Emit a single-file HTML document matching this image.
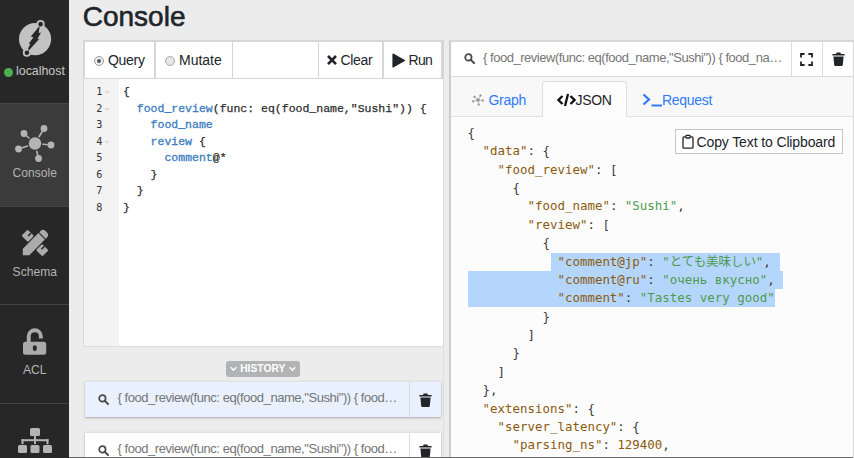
<!DOCTYPE html>
<html lang="en">
<head>
<meta charset="utf-8">
<title>Console</title>
<style>
*{box-sizing:border-box;margin:0;padding:0}
html,body{width:854px;height:458px;overflow:hidden;background:#ececec;font-family:"Liberation Sans","Noto Sans CJK JP",sans-serif;color:#212529}
body{position:relative}
.abs{position:absolute}
/* sidebar */
#side{position:absolute;left:0;top:0;width:69px;height:458px;background:#272727;color:#b4b4b4}
#side .item{position:absolute;left:0;width:70px;text-align:center;font-size:12.5px;color:#b9b9b9}
#side .sep{position:absolute;left:0;width:69px;height:1px;background:#444}
#side .lbl{position:absolute;left:0;width:69.5px;text-align:center;font-size:12.1px;line-height:14px;color:#b4b4b4}
#active{position:absolute;left:0;top:103px;width:69px;height:103px;background:#3b3b3b;border-top:1px solid #484848}
/* main */
h2{position:absolute;left:82.75px;top:1px;font-size:28px;font-weight:normal;line-height:32px;color:#212529;letter-spacing:0;-webkit-text-stroke:.6px #212529}
#ed{position:absolute;left:83px;top:40px;width:361px;height:307px;background:#dcdcdc}
#edbar{position:absolute;left:0;top:0;width:361px;height:39px;background:#d6d6d6}
.cell{position:absolute;top:2px;height:35.5px;background:#fff}
.btn{position:absolute;top:2px;height:36px;font-size:14px;line-height:36px;color:#212529;white-space:nowrap}
.vsep{position:absolute;top:0;width:2px;height:36px;background:#d9d9d9}
#code{position:absolute;left:1px;top:39px;width:359px;height:267px;background:#fff;overflow:hidden}
#gutter{position:absolute;left:0;top:0;width:35px;height:267px;background:#f3f3f3}
.ln{position:absolute;left:0;width:18.5px;text-align:right;font-family:"DejaVu Sans Mono","Liberation Mono",monospace;font-size:10.2px;line-height:16.5px;color:#333}
.fold{position:absolute;left:19.5px;width:0;height:0;border-left:3px solid transparent;border-right:3px solid transparent;border-top:3.5px solid #dcdcdc}
.cl{position:absolute;left:39px;font-family:"Liberation Mono",monospace;font-size:11.5px;line-height:16.5px;white-space:pre;color:#2b2b2b;font-weight:normal;-webkit-text-stroke:.25px #2b2b2b}
.cl b{color:#3b7cc0;font-weight:normal;-webkit-text-stroke:.3px #3b7cc0}
/* history */
#histbadge{position:absolute;left:225.5px;top:361px;width:74.5px;height:15.5px;border-radius:3px;background:#b1b3b5;color:#fff;font-size:10.3px;font-weight:bold;line-height:15.5px;text-align:center;letter-spacing:0}
.hist{position:absolute;left:85px;width:355.5px;height:36px;border-top:1px solid #dfe3e8;box-shadow:0 1px 2px rgba(0,0,0,.28)}
.hist .q{position:absolute;left:32.5px;top:-1.5px;line-height:34px;font-size:13px;color:#757575;white-space:nowrap;letter-spacing:-.45px}
.hist .vs{position:absolute;left:324px;top:0;width:1px;height:35px;background:#d9dde2}
/* right */
#rp{position:absolute;left:449px;top:40px;width:405px;height:418px;background:#d8d8d8}
#rhead{position:absolute;left:2px;top:2px;width:402px;height:34px;background:#fff}
#rhead .q{position:absolute;left:32px;top:-1.5px;line-height:34px;font-size:13px;color:#757575;white-space:nowrap;letter-spacing:-.47px}
#tabs{position:absolute;left:2px;top:37px;width:402px;height:40px;background:#f8f8f9;border-bottom:1px solid #dcdfe3}
.tab{position:absolute;top:0;font-size:14px;line-height:20px;white-space:nowrap}
#tabact{position:absolute;left:91px;top:4px;width:85px;height:36px;background:#fdfdfd;border:1px solid #dcdfe3;border-bottom:none;border-radius:4px 4px 0 0}
#json{position:absolute;left:2px;top:77px;width:402px;height:341px;background:#fcfcfc;overflow:hidden}
.jl{position:absolute;left:16.6px;font-family:"DejaVu Sans Mono","Noto Sans CJK JP",monospace;font-size:12.44px;line-height:18.37px;white-space:pre;color:#3a3a3a;height:18.37px}
.k{color:#8a5a0c}.s{color:#4f9a4f}.n{color:#8a5a0c}
.sel{position:absolute;background:#b5d6fc}
#copy{position:absolute;left:224px;top:12px;width:168px;height:25px;border:1px solid #c4c4c4;background:#fff;font-size:14px;letter-spacing:-.12px;line-height:23px;color:#212529;white-space:nowrap}
</style>
</head>
<body>
<div id="side">
  <div id="active"></div>
  <!-- logo -->
  <svg class="abs" style="left:16px;top:18px" width="40" height="42" viewBox="0 0 40 42">
    <circle cx="19.05" cy="21.05" r="16.1" fill="#c2c2c2"/>
    <line x1="24.6" y1="6.15" x2="10.9" y2="34.75" stroke="#272727" stroke-width="1.5"/>
    <circle cx="24.6" cy="6.15" r="3.2" fill="#272727" stroke="#c2c2c2" stroke-width="1.8"/>
    <circle cx="10.9" cy="34.75" r="3.2" fill="#272727" stroke="#c2c2c2" stroke-width="1.8"/>
    <path d="M23.6 8 L22.7 15.1 L25 14.5 L21.3 21.3 L23.5 20.8 L11.4 34 L15.4 26.1 L12.8 25.5 L17.6 19.2 L14.8 18.4 Z" fill="#272727"/>
  </svg>
  <div class="abs" style="left:4px;top:67.5px;width:9px;height:9px;border-radius:50%;background:#4caf50"></div>
  <div class="lbl" style="left:16px;width:55px;text-align:left;top:64px;font-size:12.4px;color:#c8c8c8">localhost</div>
  <!-- console icon -->
  <svg class="abs" style="left:14px;top:122px" width="42" height="42" viewBox="0 0 42 42" fill="#b4b4b4" stroke="#b4b4b4">
    <circle cx="30" cy="6.5" r="3.4" stroke="none"/>
    <circle cx="10" cy="11.5" r="3.4" stroke="none"/>
    <circle cx="4.5" cy="27" r="3.4" stroke="none"/>
    <circle cx="24.5" cy="36.5" r="3.4" stroke="none"/>
    <circle cx="37" cy="23" r="3.4" stroke="none"/>
    <g stroke-width="1.6"><line x1="21" y1="21.5" x2="30" y2="6.5"/><line x1="21" y1="21.5" x2="10" y2="11.5"/><line x1="21" y1="21.5" x2="4.5" y2="27"/><line x1="21" y1="21.5" x2="24.5" y2="36.5"/><line x1="21" y1="21.5" x2="37" y2="23"/></g>
    <circle cx="21" cy="21.5" r="7.5" fill="#3b3b3b" stroke="none"/>
    <circle cx="21" cy="21.5" r="6.2" stroke="none"/>
  </svg>
  <div class="lbl" style="top:166px">Console</div>
  <div class="sep" style="top:206px"></div>
  <!-- schema icon -->
  <svg class="abs" style="left:19.5px;top:228px" width="30" height="30" viewBox="0 0 30 30" fill="#ababab">
    <g transform="rotate(-45 15 15)">
      <rect x="10.7" y="0.25" width="8.6" height="9" rx="1.2"/>
      <rect x="10.7" y="20.75" width="8.6" height="9" rx="1.2"/>
      <rect x="15.2" y="4.4" width="4.2" height="1.5" fill="#272727"/>
      <rect x="15.2" y="23.2" width="4.2" height="1.5" fill="#272727"/>
    </g>
    <g transform="rotate(45 15 15)">
      <path d="M10.4 4.5 V2.7 a3.6 3.6 0 0 1 3.6 -3.6 h2 a3.6 3.6 0 0 1 3.6 3.6 V4.5 Z"/>
      <path d="M10.4 5.6 H19.6 V27.6 L15.4 32 H14.6 L10.4 27.6 Z"/>
    </g>
  </svg>
  <div class="lbl" style="top:265px">Schema</div>
  <div class="sep" style="top:304px"></div>
  <!-- lock icon -->
  <svg class="abs" style="left:21px;top:326px" width="28" height="30" viewBox="0 0 28 30">
    <path d="M7.75 16.5 V10.3 a6.05 6.05 0 0 1 12.1 0 V12.5" fill="none" stroke="#ababab" stroke-width="3.9"/>
    <rect x="2" y="15.8" width="23.2" height="13" rx="2.5" fill="#ababab"/>
    <rect x="11.9" y="19.2" width="3.8" height="5.8" rx="1.9" fill="#272727"/>
  </svg>
  <div class="lbl" style="top:363px">ACL</div>
  <div class="sep" style="top:403px"></div>
  <!-- cluster icon -->
  <svg class="abs" style="left:17px;top:427px" width="36" height="28" viewBox="0 0 36 28" fill="#b4b4b4">
    <rect x="13" y="1" width="10" height="8" rx="1.5"/>
    <rect x="17" y="8" width="2" height="9"/>
    <rect x="4.5" y="12.2" width="27" height="2"/>
    <rect x="4.5" y="12.2" width="2" height="5"/>
    <rect x="29.5" y="12.2" width="2" height="5"/>
    <rect x="1" y="18" width="9" height="8" rx="1.5"/>
    <rect x="13.5" y="18" width="9" height="8" rx="1.5"/>
    <rect x="26" y="18" width="9" height="8" rx="1.5"/>
  </svg>
</div>

<h2>Console</h2>

<div id="ed">
  <div id="edbar">
    <div class="cell" style="left:2px;width:69px"></div>
    <div class="cell" style="left:73px;width:75.5px"></div>
    <div class="cell" style="left:149.5px;width:85.5px"></div>
    <div class="cell" style="left:236px;width:63px"></div>
    <div class="cell" style="left:301px;width:57px"></div>
    <div class="abs" style="left:10.5px;top:15.5px;width:10px;height:10px;border-radius:50%;border:1px solid #9a9a9a;background:#f0f0f0"></div>
    <div class="abs" style="left:13.5px;top:18.5px;width:4px;height:4px;border-radius:50%;background:#555"></div>
    <div class="btn" style="left:25px;letter-spacing:-.3px">Query</div>
    <div class="abs" style="left:81.5px;top:15.5px;width:10px;height:10px;border-radius:50%;border:1px solid #a8a8a8;background:#e6e6e6"></div>
    <div class="btn" style="left:96px">Mutate</div>
    <svg class="abs" style="left:243px;top:13.5px" width="12" height="12" viewBox="0 0 12 12"><path d="M2 2 L10 10.2 M10 2 L2 10.2" stroke="#212529" stroke-width="2.6" fill="none"/></svg>
    <div class="btn" style="left:257.5px;letter-spacing:-.3px">Clear</div>
    <svg class="abs" style="left:309px;top:12.5px" width="14" height="15" viewBox="0 0 14 15"><path d="M1 1 L12.5 7.5 L1 14 Z" fill="#212529" stroke="#212529" stroke-width="1.2" stroke-linejoin="round"/></svg>
    <div class="btn" style="left:325.5px;letter-spacing:-.7px">Run</div>
  </div>
  <div id="code">
    <div id="gutter"></div>
    <div class="abs" style="left:0;top:3px;width:359px;height:264px">
    <div class="ln" style="top:2px">1</div><div class="fold" style="top:9px"></div>
    <div class="ln" style="top:18.5px">2</div><div class="fold" style="top:25.5px"></div>
    <div class="ln" style="top:35px">3</div>
    <div class="ln" style="top:51.5px">4</div><div class="fold" style="top:58.5px"></div>
    <div class="ln" style="top:68px">5</div>
    <div class="ln" style="top:84.5px">6</div>
    <div class="ln" style="top:101px">7</div>
    <div class="ln" style="top:117.5px">8</div>
    <div class="cl" style="top:2px">{</div>
    <div class="cl" style="top:18.5px">  <b>food_review</b>(func: eq(food_name,"Sushi")) {</div>
    <div class="cl" style="top:35px">    <b>food_name</b></div>
    <div class="cl" style="top:51.5px">    <b>review</b> {</div>
    <div class="cl" style="top:68px">      <b>comment</b>@*</div>
    <div class="cl" style="top:84.5px">    }</div>
    <div class="cl" style="top:101px">  }</div>
    <div class="cl" style="top:117.5px">}</div>
    </div>
  </div>
</div>

<div id="histbadge">HISTORY
  <svg class="abs" style="left:4.5px;top:5px" width="7" height="6" viewBox="0 0 7 6" fill="none" stroke="#fff" stroke-width="1.4"><path d="M.7 1.2 L3.5 4.2 L6.3 1.2"/></svg>
  <svg class="abs" style="left:63px;top:5px" width="7" height="6" viewBox="0 0 7 6" fill="none" stroke="#fff" stroke-width="1.4"><path d="M.7 1.2 L3.5 4.2 L6.3 1.2"/></svg>
</div>
<div class="hist" style="top:381px;background:#e8f1fd">
  <svg class="abs" style="left:13px;top:11.5px" width="11" height="11" viewBox="0 0 11 11"><circle cx="4.4" cy="4.4" r="3.2" fill="none" stroke="#4a4a4a" stroke-width="1.7"/><path d="M6.9 6.9 L10 10" stroke="#4a4a4a" stroke-width="2" stroke-linecap="round"/></svg>
  <div class="q">{ food_review(func: eq(food_name,"Sushi")) { food…</div>
  <div class="vs"></div>
  <svg class="abs" style="left:334px;top:10.5px" width="13" height="14" viewBox="0 0 13 14" fill="#212529"><rect x="0.3" y="1.9" width="12.4" height="1.7" rx=".5"/><rect x="4.2" y="0.5" width="4.6" height="2" rx=".8"/><path d="M1.4 4.6 H11.6 L10.8 13 a1.1 1.1 0 0 1 -1.1 1 H3.3 a1.1 1.1 0 0 1 -1.1 -1 Z"/></svg>
</div>
<div class="hist" style="top:432px;background:#fff">
  <svg class="abs" style="left:13px;top:11.5px" width="11" height="11" viewBox="0 0 11 11"><circle cx="4.4" cy="4.4" r="3.2" fill="none" stroke="#4a4a4a" stroke-width="1.7"/><path d="M6.9 6.9 L10 10" stroke="#4a4a4a" stroke-width="2" stroke-linecap="round"/></svg>
  <div class="q">{ food_review(func: eq(food_name,"Sushi")) { food…</div>
  <div class="vs"></div>
  <svg class="abs" style="left:334px;top:10.5px" width="13" height="14" viewBox="0 0 13 14" fill="#212529"><rect x="0.3" y="1.9" width="12.4" height="1.7" rx=".5"/><rect x="4.2" y="0.5" width="4.6" height="2" rx=".8"/><path d="M1.4 4.6 H11.6 L10.8 13 a1.1 1.1 0 0 1 -1.1 1 H3.3 a1.1 1.1 0 0 1 -1.1 -1 Z"/></svg>
</div>

<div id="rp">
  <div class="abs" style="left:0;top:1px;width:2px;height:417px;background:#cdcdcd"></div>
  <div id="rhead">
    <svg class="abs" style="left:12.5px;top:10.5px" width="11" height="11" viewBox="0 0 11 11"><circle cx="4.4" cy="4.4" r="3.2" fill="none" stroke="#4a4a4a" stroke-width="1.7"/><path d="M6.9 6.9 L10 10" stroke="#4a4a4a" stroke-width="2" stroke-linecap="round"/></svg>
    <div class="q">{ food_review(func: eq(food_name,"Sushi")) { food_na…</div>
    <div class="abs" style="left:340px;top:0;width:1px;height:34px;background:#dcdcdc"></div>
    <svg class="abs" style="left:349px;top:11px" width="13" height="13" viewBox="0 0 13 13" fill="none" stroke="#212529" stroke-width="1.8"><path d="M1 4.6 V1 H4.6 M8.4 1 H12 V4.6 M12 8.4 V12 H8.4 M4.6 12 H1 V8.4"/></svg>
    <div class="abs" style="left:371px;top:0;width:1px;height:34px;background:#dcdcdc"></div>
    <svg class="abs" style="left:381px;top:10px" width="13" height="14" viewBox="0 0 13 14" fill="#212529"><rect x="0.3" y="1.9" width="12.4" height="1.7" rx=".5"/><rect x="4.2" y="0.5" width="4.6" height="2" rx=".8"/><path d="M1.4 4.6 H11.6 L10.8 13 a1.1 1.1 0 0 1 -1.1 1 H3.3 a1.1 1.1 0 0 1 -1.1 -1 Z"/></svg>
  </div>
  <div id="tabs">
    <div id="tabact"></div>
    <svg class="abs" style="left:20.5px;top:17px" width="12" height="12" viewBox="0 0 12 12" fill="#9a9a9a" stroke="#9a9a9a" stroke-width=".6"><circle cx="6" cy="6" r="1.6"/><circle cx="8.5" cy="1.5" r=".9"/><circle cx="2.5" cy="2.8" r=".9"/><circle cx="1" cy="7.3" r=".9"/><circle cx="6.8" cy="10.6" r=".9"/><circle cx="10.8" cy="6.5" r=".9"/><path d="M6 6 L8.5 1.5 M6 6 L2.5 2.8 M6 6 L1 7.3 M6 6 L6.8 10.6 M6 6 L10.8 6.5"/></svg>
    <div class="tab" style="left:37.5px;top:13px;color:#2f7bf6;letter-spacing:-.3px">Graph</div>
    <svg class="abs" style="left:105.5px;top:16px" width="19" height="14" viewBox="0 0 19 14" fill="none" stroke="#111" stroke-width="2.3"><path d="M5.5 3 L1.5 7 L5.5 11 M13.5 3 L17.5 7 L13.5 11 M11 1 L8 13"/></svg>
    <div class="tab" style="left:124.5px;top:13px;color:#212529;letter-spacing:-.35px">JSON</div>
    <svg class="abs" style="left:191px;top:16px" width="21" height="14" viewBox="0 0 21 14" fill="none" stroke="#2f7bf6" stroke-width="2.2"><path d="M1.5 1.5 L7 6.5 L1.5 11.5 M9.5 12.5 H20"/></svg>
    <div class="tab" style="left:211px;top:13px;color:#2f7bf6;letter-spacing:-.3px">Request</div>
  </div>
  <div id="json">
    <div class="sel" style="left:99.5px;top:135.7px;width:229.5px;height:18.3px"></div>
    <div class="sel" style="left:17px;top:153.9px;width:315px;height:18.3px"></div>
    <div class="sel" style="left:17px;top:172.1px;width:307px;height:18.3px"></div>
    <div class="jl" style="top:7.00px">{</div>
    <div class="jl" style="top:25.37px">  <span class="k">"data"</span>: {</div>
    <div class="jl" style="top:43.74px">    <span class="k">"food_review"</span>: [</div>
    <div class="jl" style="top:62.11px">      {</div>
    <div class="jl" style="top:80.48px">        <span class="k">"food_name"</span>: <span class="s">"Sushi"</span>,</div>
    <div class="jl" style="top:98.85px">        <span class="k">"review"</span>: [</div>
    <div class="jl" style="top:117.22px">          {</div>
    <div class="jl" style="top:135.59px">            <span class="k">"comment@jp"</span>: <span class="s">"とても美味しい"</span>,</div>
    <div class="jl" style="top:153.96px">            <span class="k">"comment@ru"</span>: <span class="s">"очень вкусно"</span>,</div>
    <div class="jl" style="top:172.33px">            <span class="k">"comment"</span>: <span class="s">"Tastes very good"</span></div>
    <div class="jl" style="top:190.70px">          }</div>
    <div class="jl" style="top:209.07px">        ]</div>
    <div class="jl" style="top:227.44px">      }</div>
    <div class="jl" style="top:245.81px">    ]</div>
    <div class="jl" style="top:264.18px">  },</div>
    <div class="jl" style="top:282.55px">  <span class="k">"extensions"</span>: {</div>
    <div class="jl" style="top:300.92px">    <span class="k">"server_latency"</span>: {</div>
    <div class="jl" style="top:319.29px">      <span class="k">"parsing_ns"</span>: <span class="n">129400</span>,</div>
    <div id="copy">
      <svg class="abs" style="left:5.5px;top:4px" width="12" height="15" viewBox="0 0 12 15" fill="none" stroke="#212529" stroke-width="1.3"><path d="M3.6 2.9 H2 a1 1 0 0 0 -1 1 V13.2 a1 1 0 0 0 1 1 H10 a1 1 0 0 0 1 -1 V3.9 a1 1 0 0 0 -1 -1 H8.4"/><rect x="3.9" y="1.4" width="4.2" height="2.6" rx=".7"/></svg>
      <span class="abs" style="left:20.5px;top:1px">Copy Text to Clipboard</span>
    </div>
  </div>
</div>
<div class="abs" style="left:443px;top:347px;width:1px;height:111px;background:#dedede"></div>
<div class="abs" style="left:69px;top:457px;width:784px;height:1px;background:#6a6a6a"></div>
</body>
</html>
